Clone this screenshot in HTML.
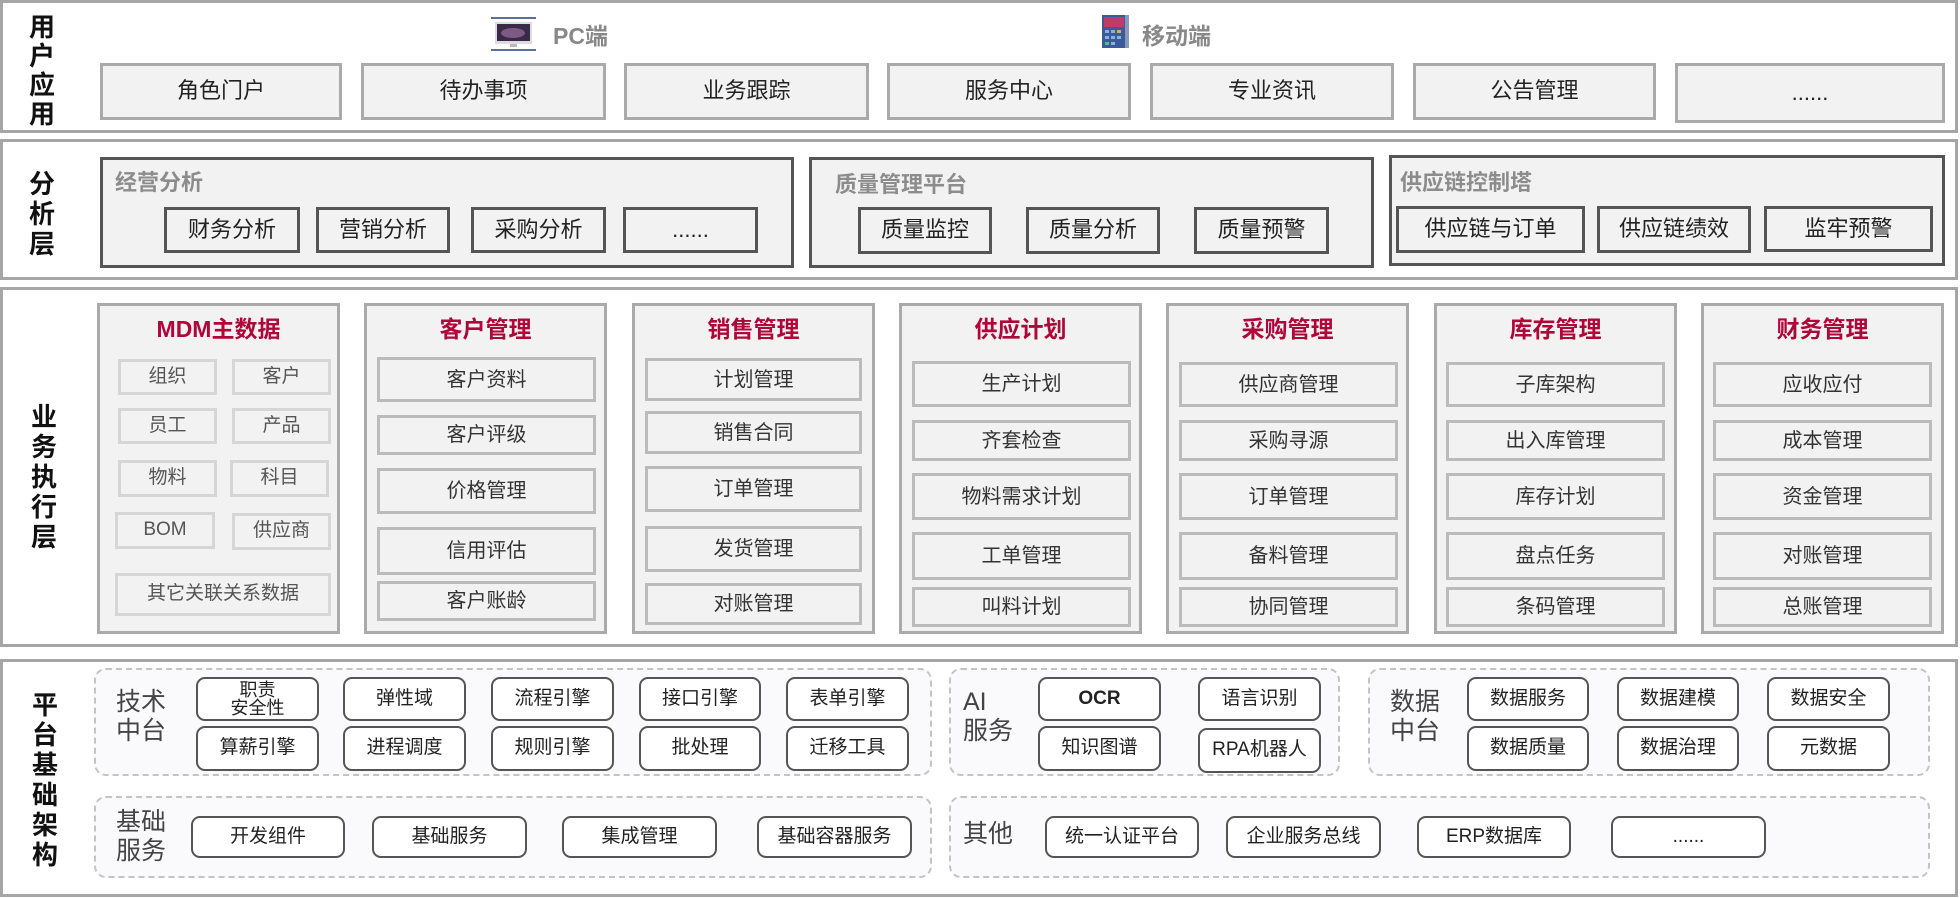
<!DOCTYPE html>
<html><head><meta charset="utf-8">
<style>
*{margin:0;padding:0;box-sizing:border-box}
body{width:1960px;height:898px;background:#fff;position:relative;overflow:hidden;font-family:"Liberation Sans","Noto Sans CJK SC",sans-serif;color:#333}
.a{position:absolute}
.sec{position:absolute;left:0;width:1958px;border:3px solid #a6a6a6;background:#fff}
.lbl{position:absolute;font-weight:bold;font-size:26px;color:#111;line-height:1;text-align:center;width:30px}
.b{position:absolute;display:flex;align-items:center;justify-content:center;text-align:center;line-height:1.1}
.u{background:#f2f2f2;border:3px solid #aaa;font-size:22px;color:#222}
.grp{position:absolute;background:#f2f2f2;border:3px solid #555}
.gt{position:absolute;font-weight:bold;font-size:22px;color:#8c8c8c}
.ab{background:#f2f2f2;border:3px solid #555;font-size:22px;color:#222}
.col{position:absolute;top:303px;height:331px;width:243px;background:#f2f2f2;border:3px solid #aaa}
.ct{position:absolute;left:0;right:0;top:4px;text-align:center;font-weight:bold;font-size:23px;color:#b0063a}
.it{background:#f2f2f2;border:3px solid #bbb;font-size:20px;color:#333}
.mi{background:#f2f2f2;border:3px solid #d6d6d6;font-size:19px;color:#555}
.dg{position:absolute;border:2px dashed #c4c4c4;border-radius:12px;background:#fafafc}
.pl{position:absolute;font-size:25px;color:#444;line-height:1.15}
.pb{background:#fff;border:2px solid #555;border-radius:9px;font-size:19px;color:#222}
</style></head><body>

<div class="sec" style="top:0;height:133px"></div>
<div class="lbl" style="left:27px;top:13px;line-height:29px">用<br>户<br>应<br>用</div>
<svg class="a" style="left:491px;top:17px" width="45" height="34" viewBox="0 0 45 34">
<rect x="0" y="0" width="45" height="2" fill="#5a6f9e"/><rect x="0" y="32" width="45" height="2" fill="#5a6f9e"/>
<rect x="4" y="5" width="37" height="22" fill="#ddd"/><rect x="6" y="7" width="33" height="17" fill="#3a2a48"/>
<ellipse cx="22" cy="16" rx="12" ry="5" fill="#9a6fa0" opacity=".7"/><rect x="19" y="27" width="7" height="3" fill="#bbb"/></svg>
<div class="a" style="left:553px;top:17px;font-size:23px;font-weight:bold;color:#888">PC端</div>
<svg class="a" style="left:1102px;top:15px" width="27" height="33" viewBox="0 0 27 33">
<rect width="27" height="33" fill="#3a5a9a"/><rect x="2" y="2" width="20" height="10" fill="#c23a6a"/>
<g fill="#8ab0e0"><rect x="3" y="15" width="4" height="3"/><rect x="9" y="15" width="4" height="3"/><rect x="15" y="15" width="4" height="3" fill="#e0b040"/><rect x="3" y="21" width="4" height="3"/><rect x="9" y="21" width="4" height="3"/><rect x="15" y="21" width="4" height="3"/><rect x="3" y="27" width="4" height="3" fill="#50c080"/><rect x="9" y="27" width="4" height="3"/></g>
<rect x="23" y="0" width="4" height="33" fill="#8899bb"/></svg>
<div class="a" style="left:1142px;top:17px;font-size:23px;font-weight:bold;color:#888">移动端</div>
<div class="b u" style="left:100px;top:63px;width:242px;height:57px">角色门户</div>
<div class="b u" style="left:361px;top:63px;width:245px;height:57px">待办事项</div>
<div class="b u" style="left:624px;top:63px;width:245px;height:57px">业务跟踪</div>
<div class="b u" style="left:887px;top:63px;width:244px;height:57px">服务中心</div>
<div class="b u" style="left:1150px;top:63px;width:244px;height:57px">专业资讯</div>
<div class="b u" style="left:1413px;top:63px;width:243px;height:57px">公告管理</div>
<div class="b u" style="left:1675px;top:63px;width:270px;height:60px">......</div>

<div class="sec" style="top:139px;height:141px"></div>
<div class="lbl" style="left:27px;top:169px;line-height:30px">分<br>析<br>层</div>
<div class="grp" style="left:100px;top:157px;width:694px;height:111px"></div>
<div class="gt" style="left:115px;top:165px">经营分析</div>
<div class="b ab" style="left:164px;top:207px;width:136px;height:46px">财务分析</div>
<div class="b ab" style="left:316px;top:207px;width:134px;height:46px">营销分析</div>
<div class="b ab" style="left:471px;top:207px;width:135px;height:46px">采购分析</div>
<div class="b ab" style="left:623px;top:207px;width:135px;height:46px">......</div>
<div class="grp" style="left:809px;top:157px;width:565px;height:111px"></div>
<div class="gt" style="left:835px;top:167px">质量管理平台</div>
<div class="b ab" style="left:858px;top:207px;width:134px;height:47px">质量监控</div>
<div class="b ab" style="left:1026px;top:207px;width:134px;height:47px">质量分析</div>
<div class="b ab" style="left:1194px;top:207px;width:135px;height:47px">质量预警</div>
<div class="grp" style="left:1389px;top:155px;width:556px;height:111px"></div>
<div class="gt" style="left:1400px;top:165px">供应链控制塔</div>
<div class="b ab" style="left:1396px;top:206px;width:189px;height:47px">供应链与订单</div>
<div class="b ab" style="left:1597px;top:206px;width:154px;height:47px">供应链绩效</div>
<div class="b ab" style="left:1764px;top:206px;width:169px;height:46px">监牢预警</div>

<div class="sec" style="top:287px;height:360px"></div>
<div class="lbl" style="left:29px;top:402px;line-height:30px">业<br>务<br>执<br>行<br>层</div>

<div class="col" style="left:97px"><div class="ct">MDM主数据</div></div>
<div class="b mi" style="left:118px;top:359px;width:99px;height:36px">组织</div>
<div class="b mi" style="left:232px;top:359px;width:99px;height:36px">客户</div>
<div class="b mi" style="left:118px;top:408px;width:99px;height:36px">员工</div>
<div class="b mi" style="left:232px;top:408px;width:99px;height:36px">产品</div>
<div class="b mi" style="left:118px;top:460px;width:99px;height:37px">物料</div>
<div class="b mi" style="left:230px;top:460px;width:99px;height:37px">科目</div>
<div class="b mi" style="left:115px;top:512px;width:100px;height:37px">BOM</div>
<div class="b mi" style="left:232px;top:513px;width:99px;height:37px">供应商</div>
<div class="b mi" style="left:115px;top:573px;width:216px;height:43px">其它关联关系数据</div>

<div class="col" style="left:364px"><div class="ct">客户管理</div></div>
<div class="col" style="left:632px"><div class="ct">销售管理</div></div>
<div class="col" style="left:899px"><div class="ct">供应计划</div></div>
<div class="col" style="left:1166px"><div class="ct">采购管理</div></div>
<div class="col" style="left:1434px"><div class="ct">库存管理</div></div>
<div class="col" style="left:1701px"><div class="ct">财务管理</div></div>

<div class="b it" style="left:377px;top:357px;width:219px;height:45px">客户资料</div>
<div class="b it" style="left:377px;top:415px;width:219px;height:40px">客户评级</div>
<div class="b it" style="left:377px;top:468px;width:219px;height:46px">价格管理</div>
<div class="b it" style="left:377px;top:527px;width:219px;height:48px">信用评估</div>
<div class="b it" style="left:377px;top:581px;width:219px;height:40px">客户账龄</div>
<div class="b it" style="left:645px;top:358px;width:217px;height:43px">计划管理</div>
<div class="b it" style="left:645px;top:411px;width:217px;height:43px">销售合同</div>
<div class="b it" style="left:645px;top:466px;width:217px;height:46px">订单管理</div>
<div class="b it" style="left:645px;top:526px;width:217px;height:46px">发货管理</div>
<div class="b it" style="left:645px;top:583px;width:217px;height:42px">对账管理</div>
<div class="b it" style="left:912px;top:361px;width:219px;height:46px">生产计划</div>
<div class="b it" style="left:912px;top:420px;width:219px;height:41px">齐套检查</div>
<div class="b it" style="left:912px;top:473px;width:219px;height:47px">物料需求计划</div>
<div class="b it" style="left:912px;top:532px;width:219px;height:48px">工单管理</div>
<div class="b it" style="left:912px;top:587px;width:219px;height:40px">叫料计划</div>
<div class="b it" style="left:1179px;top:362px;width:219px;height:45px">供应商管理</div>
<div class="b it" style="left:1179px;top:420px;width:219px;height:41px">采购寻源</div>
<div class="b it" style="left:1179px;top:473px;width:219px;height:47px">订单管理</div>
<div class="b it" style="left:1179px;top:532px;width:219px;height:48px">备料管理</div>
<div class="b it" style="left:1179px;top:587px;width:219px;height:40px">协同管理</div>
<div class="b it" style="left:1446px;top:362px;width:219px;height:45px">子库架构</div>
<div class="b it" style="left:1446px;top:420px;width:219px;height:41px">出入库管理</div>
<div class="b it" style="left:1446px;top:473px;width:219px;height:47px">库存计划</div>
<div class="b it" style="left:1446px;top:532px;width:219px;height:48px">盘点任务</div>
<div class="b it" style="left:1446px;top:587px;width:219px;height:40px">条码管理</div>
<div class="b it" style="left:1713px;top:362px;width:219px;height:45px">应收应付</div>
<div class="b it" style="left:1713px;top:420px;width:219px;height:41px">成本管理</div>
<div class="b it" style="left:1713px;top:473px;width:219px;height:47px">资金管理</div>
<div class="b it" style="left:1713px;top:532px;width:219px;height:48px">对账管理</div>
<div class="b it" style="left:1713px;top:587px;width:219px;height:40px">总账管理</div>

<div class="sec" style="top:659px;height:238px"></div>
<div class="lbl" style="left:30px;top:690px;line-height:30px">平<br>台<br>基<br>础<br>架<br>构</div>

<div class="dg" style="left:94px;top:668px;width:838px;height:108px"></div>
<div class="pl" style="left:116px;top:688px">技术<br>中台</div>
<div class="b pb" style="left:196px;top:677px;width:123px;height:44px;font-size:18px;line-height:1">职责<br>安全性</div>
<div class="b pb" style="left:343px;top:677px;width:123px;height:44px">弹性域</div>
<div class="b pb" style="left:491px;top:677px;width:123px;height:44px">流程引擎</div>
<div class="b pb" style="left:639px;top:677px;width:122px;height:44px">接口引擎</div>
<div class="b pb" style="left:786px;top:677px;width:123px;height:44px">表单引擎</div>
<div class="b pb" style="left:196px;top:726px;width:123px;height:45px">算薪引擎</div>
<div class="b pb" style="left:343px;top:726px;width:123px;height:45px">进程调度</div>
<div class="b pb" style="left:491px;top:726px;width:123px;height:45px">规则引擎</div>
<div class="b pb" style="left:639px;top:726px;width:122px;height:45px">批处理</div>
<div class="b pb" style="left:786px;top:726px;width:123px;height:45px">迁移工具</div>

<div class="dg" style="left:949px;top:668px;width:391px;height:108px"></div>
<div class="pl" style="left:963px;top:688px">AI<br>服务</div>
<div class="b pb" style="left:1038px;top:677px;width:123px;height:44px;font-weight:bold">OCR</div>
<div class="b pb" style="left:1198px;top:677px;width:123px;height:44px">语言识别</div>
<div class="b pb" style="left:1038px;top:726px;width:123px;height:45px">知识图谱</div>
<div class="b pb" style="left:1198px;top:728px;width:123px;height:45px">RPA机器人</div>

<div class="dg" style="left:1368px;top:668px;width:562px;height:108px"></div>
<div class="pl" style="left:1390px;top:688px">数据<br>中台</div>
<div class="b pb" style="left:1467px;top:677px;width:122px;height:44px">数据服务</div>
<div class="b pb" style="left:1617px;top:677px;width:122px;height:44px">数据建模</div>
<div class="b pb" style="left:1767px;top:677px;width:123px;height:44px">数据安全</div>
<div class="b pb" style="left:1467px;top:726px;width:122px;height:45px">数据质量</div>
<div class="b pb" style="left:1617px;top:726px;width:122px;height:45px">数据治理</div>
<div class="b pb" style="left:1767px;top:726px;width:123px;height:45px">元数据</div>

<div class="dg" style="left:94px;top:796px;width:838px;height:82px"></div>
<div class="pl" style="left:116px;top:808px">基础<br>服务</div>
<div class="b pb" style="left:191px;top:816px;width:154px;height:42px">开发组件</div>
<div class="b pb" style="left:372px;top:816px;width:155px;height:42px">基础服务</div>
<div class="b pb" style="left:562px;top:816px;width:155px;height:42px">集成管理</div>
<div class="b pb" style="left:757px;top:816px;width:155px;height:42px">基础容器服务</div>

<div class="dg" style="left:949px;top:796px;width:981px;height:82px"></div>
<div class="pl" style="left:963px;top:820px">其他</div>
<div class="b pb" style="left:1045px;top:816px;width:154px;height:42px">统一认证平台</div>
<div class="b pb" style="left:1226px;top:816px;width:155px;height:42px">企业服务总线</div>
<div class="b pb" style="left:1417px;top:816px;width:154px;height:42px">ERP数据库</div>
<div class="b pb" style="left:1611px;top:816px;width:155px;height:42px">......</div>
</body></html>
